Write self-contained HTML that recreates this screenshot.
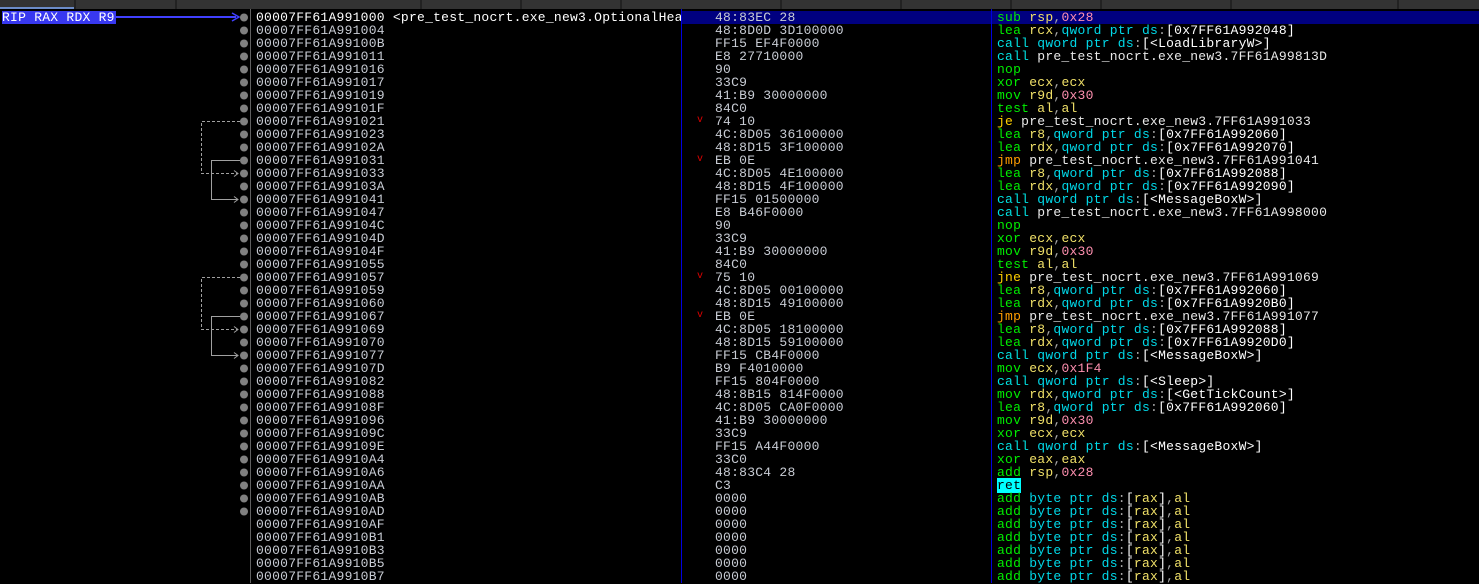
<!DOCTYPE html>
<html><head><meta charset="utf-8"><style>
*{margin:0;padding:0;box-sizing:border-box}
body{width:1479px;height:583px;background:#000;overflow:hidden;position:relative;font-family:"Liberation Mono","DejaVu Sans Mono",monospace;font-size:13px;line-height:13px;color:#c8ccd4;letter-spacing:0.25px}
.tabs{position:absolute;left:0;top:0;width:1479px;height:9px;background:#333}
.tabs i{position:absolute;top:0;width:2px;height:9px;background:#222}
.col{position:absolute;top:11px;white-space:pre}
.hl{position:absolute;left:682px;top:11px;width:797px;height:13px;background:#000080}
.vs{position:absolute;top:9px;width:1px;height:574px}
.m{color:#00ee00}.c{color:#00e0e0}.j{color:#ffd000}.jm{color:#ff9d00}
.r{color:#f0e068}.k{color:#00d8e8}.p{color:#a8a8a8}.b{color:#fff}.n{color:#ff90b0}.l{color:#e8e8e8}
.ret{background:#00ffff;color:#000}
.rv{position:absolute;left:697px;color:#e00000;font-size:10px}
</style></head><body>
<div class="tabs"><i style="left:74px"></i><i style="left:175px"></i><i style="left:420px"></i><i style="left:520px"></i><i style="left:620px"></i><i style="left:780px"></i><i style="left:900px"></i><i style="left:1010px"></i><i style="left:1100px"></i><i style="left:1230px"></i><i style="left:1397px"></i><div style="position:absolute;left:0;top:7px;width:74px;height:2px;background:#6c8cc8"></div></div>
<div class="hl"></div>
<div class="vs" style="left:250px;background:#606060"></div>
<div class="vs" style="left:681px;background:#0000e0"></div>
<div class="vs" style="left:991px;background:#0000e0"></div>
<div style="position:absolute;left:2px;top:11px;width:114px;height:13px;background:#3838f0;color:#fff" class="col">RIP RAX RDX R9</div>
<div style="position:absolute;left:116px;top:16px;width:120px;height:2px;background:#4040ff"></div>
<svg style="position:absolute;left:0;top:0" width="260" height="583">
<path d="M232 13 L239 17 L232 21" stroke="#4040ff" stroke-width="1.5" fill="none"/>
<g stroke="#a0a0a0" fill="none" stroke-width="1">
<path d="M240 121.5 H201.5 V173.5 H238" stroke-dasharray="3,2"/>
<path d="M234 170.5 L238 173.5 L234 176.5"/>
<path d="M240 160.5 H211.5 V199.5 H238"/>
<path d="M234 196.5 L238 199.5 L234 202.5"/>
<path d="M240 277.5 H201.5 V329.5 H238" stroke-dasharray="3,2"/>
<path d="M234 326.5 L238 329.5 L234 332.5"/>
<path d="M240 316.5 H211.5 V355.5 H238"/>
<path d="M234 352.5 L238 355.5 L234 358.5"/>
</g>
<g fill="#808080">
<circle cx="244" cy="17.5" r="4"/><circle cx="244" cy="30.5" r="4"/><circle cx="244" cy="43.5" r="4"/><circle cx="244" cy="56.5" r="4"/><circle cx="244" cy="69.5" r="4"/><circle cx="244" cy="82.5" r="4"/><circle cx="244" cy="95.5" r="4"/><circle cx="244" cy="108.5" r="4"/><circle cx="244" cy="121.5" r="4"/><circle cx="244" cy="134.5" r="4"/><circle cx="244" cy="147.5" r="4"/><circle cx="244" cy="160.5" r="4"/><circle cx="244" cy="173.5" r="4"/><circle cx="244" cy="186.5" r="4"/><circle cx="244" cy="199.5" r="4"/><circle cx="244" cy="212.5" r="4"/><circle cx="244" cy="225.5" r="4"/><circle cx="244" cy="238.5" r="4"/><circle cx="244" cy="251.5" r="4"/><circle cx="244" cy="264.5" r="4"/><circle cx="244" cy="277.5" r="4"/><circle cx="244" cy="290.5" r="4"/><circle cx="244" cy="303.5" r="4"/><circle cx="244" cy="316.5" r="4"/><circle cx="244" cy="329.5" r="4"/><circle cx="244" cy="342.5" r="4"/><circle cx="244" cy="355.5" r="4"/><circle cx="244" cy="368.5" r="4"/><circle cx="244" cy="381.5" r="4"/><circle cx="244" cy="394.5" r="4"/><circle cx="244" cy="407.5" r="4"/><circle cx="244" cy="420.5" r="4"/><circle cx="244" cy="433.5" r="4"/><circle cx="244" cy="446.5" r="4"/><circle cx="244" cy="459.5" r="4"/><circle cx="244" cy="472.5" r="4"/><circle cx="244" cy="485.5" r="4"/><circle cx="244" cy="498.5" r="4"/><circle cx="244" cy="511.5" r="4"/>
</g>
</svg>
<div class="col" style="left:256px;width:425px;overflow:hidden"><span style="color:#fff">00007FF61A991000 &lt;pre_test_nocrt.exe_new3.OptionalHea</span>
00007FF61A991004
00007FF61A99100B
00007FF61A991011
00007FF61A991016
00007FF61A991017
00007FF61A991019
00007FF61A99101F
00007FF61A991021
00007FF61A991023
00007FF61A99102A
00007FF61A991031
00007FF61A991033
00007FF61A99103A
00007FF61A991041
00007FF61A991047
00007FF61A99104C
00007FF61A99104D
00007FF61A99104F
00007FF61A991055
00007FF61A991057
00007FF61A991059
00007FF61A991060
00007FF61A991067
00007FF61A991069
00007FF61A991070
00007FF61A991077
00007FF61A99107D
00007FF61A991082
00007FF61A991088
00007FF61A99108F
00007FF61A991096
00007FF61A99109C
00007FF61A99109E
00007FF61A9910A4
00007FF61A9910A6
00007FF61A9910AA
00007FF61A9910AB
00007FF61A9910AD
00007FF61A9910AF
00007FF61A9910B1
00007FF61A9910B3
00007FF61A9910B5
00007FF61A9910B7</div>
<div class="rv" style="top:114px">v</div><div class="rv" style="top:153px">v</div><div class="rv" style="top:270px">v</div><div class="rv" style="top:309px">v</div>
<div class="col" style="left:715px">48:83EC 28
48:8D0D 3D100000
FF15 EF4F0000
E8 27710000
90
33C9
41:B9 30000000
84C0
74 10
4C:8D05 36100000
48:8D15 3F100000
EB 0E
4C:8D05 4E100000
48:8D15 4F100000
FF15 01500000
E8 B46F0000
90
33C9
41:B9 30000000
84C0
75 10
4C:8D05 00100000
48:8D15 49100000
EB 0E
4C:8D05 18100000
48:8D15 59100000
FF15 CB4F0000
B9 F4010000
FF15 804F0000
48:8B15 814F0000
4C:8D05 CA0F0000
41:B9 30000000
33C9
FF15 A44F0000
33C0
48:83C4 28
C3
0000
0000
0000
0000
0000
0000
0000</div>
<div class="col" style="left:997px"><span class="m">sub</span> <span class="r">rsp</span><span class="p">,</span><span class="n">0x28</span>
<span class="m">lea</span> <span class="r">rcx</span><span class="p">,</span><span class="k">qword ptr ds</span><span class="p">:</span><span class="b">[0x7FF61A992048]</span>
<span class="c">call</span> <span class="k">qword ptr ds</span><span class="p">:</span><span class="b">[&lt;LoadLibraryW&gt;]</span>
<span class="c">call</span> <span class="l">pre_test_nocrt.exe_new3.7FF61A99813D</span>
<span class="m">nop</span>
<span class="m">xor</span> <span class="r">ecx</span><span class="p">,</span><span class="r">ecx</span>
<span class="m">mov</span> <span class="r">r9d</span><span class="p">,</span><span class="n">0x30</span>
<span class="m">test</span> <span class="r">al</span><span class="p">,</span><span class="r">al</span>
<span class="j">je</span> <span class="l">pre_test_nocrt.exe_new3.7FF61A991033</span>
<span class="m">lea</span> <span class="r">r8</span><span class="p">,</span><span class="k">qword ptr ds</span><span class="p">:</span><span class="b">[0x7FF61A992060]</span>
<span class="m">lea</span> <span class="r">rdx</span><span class="p">,</span><span class="k">qword ptr ds</span><span class="p">:</span><span class="b">[0x7FF61A992070]</span>
<span class="jm">jmp</span> <span class="l">pre_test_nocrt.exe_new3.7FF61A991041</span>
<span class="m">lea</span> <span class="r">r8</span><span class="p">,</span><span class="k">qword ptr ds</span><span class="p">:</span><span class="b">[0x7FF61A992088]</span>
<span class="m">lea</span> <span class="r">rdx</span><span class="p">,</span><span class="k">qword ptr ds</span><span class="p">:</span><span class="b">[0x7FF61A992090]</span>
<span class="c">call</span> <span class="k">qword ptr ds</span><span class="p">:</span><span class="b">[&lt;MessageBoxW&gt;]</span>
<span class="c">call</span> <span class="l">pre_test_nocrt.exe_new3.7FF61A998000</span>
<span class="m">nop</span>
<span class="m">xor</span> <span class="r">ecx</span><span class="p">,</span><span class="r">ecx</span>
<span class="m">mov</span> <span class="r">r9d</span><span class="p">,</span><span class="n">0x30</span>
<span class="m">test</span> <span class="r">al</span><span class="p">,</span><span class="r">al</span>
<span class="j">jne</span> <span class="l">pre_test_nocrt.exe_new3.7FF61A991069</span>
<span class="m">lea</span> <span class="r">r8</span><span class="p">,</span><span class="k">qword ptr ds</span><span class="p">:</span><span class="b">[0x7FF61A992060]</span>
<span class="m">lea</span> <span class="r">rdx</span><span class="p">,</span><span class="k">qword ptr ds</span><span class="p">:</span><span class="b">[0x7FF61A9920B0]</span>
<span class="jm">jmp</span> <span class="l">pre_test_nocrt.exe_new3.7FF61A991077</span>
<span class="m">lea</span> <span class="r">r8</span><span class="p">,</span><span class="k">qword ptr ds</span><span class="p">:</span><span class="b">[0x7FF61A992088]</span>
<span class="m">lea</span> <span class="r">rdx</span><span class="p">,</span><span class="k">qword ptr ds</span><span class="p">:</span><span class="b">[0x7FF61A9920D0]</span>
<span class="c">call</span> <span class="k">qword ptr ds</span><span class="p">:</span><span class="b">[&lt;MessageBoxW&gt;]</span>
<span class="m">mov</span> <span class="r">ecx</span><span class="p">,</span><span class="n">0x1F4</span>
<span class="c">call</span> <span class="k">qword ptr ds</span><span class="p">:</span><span class="b">[&lt;Sleep&gt;]</span>
<span class="m">mov</span> <span class="r">rdx</span><span class="p">,</span><span class="k">qword ptr ds</span><span class="p">:</span><span class="b">[&lt;GetTickCount&gt;]</span>
<span class="m">lea</span> <span class="r">r8</span><span class="p">,</span><span class="k">qword ptr ds</span><span class="p">:</span><span class="b">[0x7FF61A992060]</span>
<span class="m">mov</span> <span class="r">r9d</span><span class="p">,</span><span class="n">0x30</span>
<span class="m">xor</span> <span class="r">ecx</span><span class="p">,</span><span class="r">ecx</span>
<span class="c">call</span> <span class="k">qword ptr ds</span><span class="p">:</span><span class="b">[&lt;MessageBoxW&gt;]</span>
<span class="m">xor</span> <span class="r">eax</span><span class="p">,</span><span class="r">eax</span>
<span class="m">add</span> <span class="r">rsp</span><span class="p">,</span><span class="n">0x28</span>
<span class="ret">ret</span>
<span class="m">add</span> <span class="k">byte ptr ds</span><span class="p">:</span><span class="b">[</span><span class="r">rax</span><span class="b">]</span><span class="p">,</span><span class="r">al</span>
<span class="m">add</span> <span class="k">byte ptr ds</span><span class="p">:</span><span class="b">[</span><span class="r">rax</span><span class="b">]</span><span class="p">,</span><span class="r">al</span>
<span class="m">add</span> <span class="k">byte ptr ds</span><span class="p">:</span><span class="b">[</span><span class="r">rax</span><span class="b">]</span><span class="p">,</span><span class="r">al</span>
<span class="m">add</span> <span class="k">byte ptr ds</span><span class="p">:</span><span class="b">[</span><span class="r">rax</span><span class="b">]</span><span class="p">,</span><span class="r">al</span>
<span class="m">add</span> <span class="k">byte ptr ds</span><span class="p">:</span><span class="b">[</span><span class="r">rax</span><span class="b">]</span><span class="p">,</span><span class="r">al</span>
<span class="m">add</span> <span class="k">byte ptr ds</span><span class="p">:</span><span class="b">[</span><span class="r">rax</span><span class="b">]</span><span class="p">,</span><span class="r">al</span>
<span class="m">add</span> <span class="k">byte ptr ds</span><span class="p">:</span><span class="b">[</span><span class="r">rax</span><span class="b">]</span><span class="p">,</span><span class="r">al</span></div>
</body></html>
